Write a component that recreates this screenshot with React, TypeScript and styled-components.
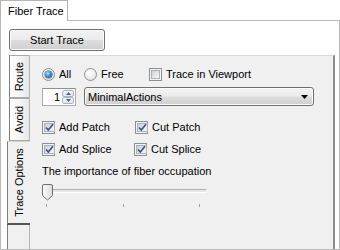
import React from "react";
import styled, { createGlobalStyle } from "styled-components";

const GlobalStyle = createGlobalStyle`
  html, body {
    margin: 0;
    padding: 0;
    background: #ffffff;
  }
  body {
    font-family: "Liberation Sans", Arial, sans-serif;
    font-size: 11px;
    color: #000000;
  }
`;

const Root = styled.div`
  width: 340px;
  height: 250px;
  display: flex;
  flex-direction: column;
  background: #ffffff;
  overflow: hidden;
`;

const TabHeaderRow = styled.div`
  display: flex;
  height: 20px;
`;

const OuterTab = styled.div`
  width: 68px;
  height: 20px;
  box-sizing: border-box;
  padding: 3px 0 0 7px;
  border: 1px solid #b4b4b4;
  border-bottom: none;
  background: #ffffff;
  margin-bottom: -1px;
  position: relative;
  z-index: 1;
  line-height: 14px;
  height: 21px;
`;

const OuterPage = styled.div`
  flex: 1;
  display: flex;
  flex-direction: column;
  border: 1px solid #b9b9b9;
  padding: 8px 4px 0 6px;
  min-height: 0;
`;

const StartButton = styled.button`
  width: 96px;
  height: 22px;
  margin-left: 2px;
  padding: 0;
  border: 1px solid #707070;
  border-radius: 3px;
  background: linear-gradient(
    to bottom,
    #f2f2f2 0%,
    #ebebeb 48%,
    #dddddd 52%,
    #cfcfcf 100%
  );
  box-shadow: inset 0 0 0 1px #fcfcfc;
  font-family: "Liberation Sans", Arial, sans-serif;
  font-size: 11px;
  color: #000000;
`;

const InnerTabs = styled.div`
  flex: 1;
  display: flex;
  margin-top: 4px;
  min-height: 0;
`;

const TabStrip = styled.div`
  width: 22px;
  display: flex;
  flex-direction: column;
`;

const SideTab = styled.div<{ $h: number; $selected?: boolean }>`
  height: ${(p) => p.$h}px;
  box-sizing: border-box;
  display: flex;
  align-items: center;
  justify-content: center;
  margin-left: ${(p) => (p.$selected ? 0 : 2)}px;
  margin-right: ${(p) => (p.$selected ? -1 : 0)}px;
  border: 1px solid ${(p) => (p.$selected ? "#7e7e7e" : "#a9a9a9")};
  border-right: none;
  border-top-color: ${(p) => (p.$selected ? "#d0d0d0" : "#a9a9a9")};
  border-left-color: #7e7e7e;
  background: ${(p) =>
    p.$selected
      ? "#f0f0f0"
      : "linear-gradient(to right, #fdfdfd 0%, #f3f3f3 60%, #e6e6e6 100%)"};
  position: relative;
  z-index: ${(p) => (p.$selected ? 1 : 0)};
  border-bottom-color: ${(p) => (p.$selected ? "#555555" : "#a9a9a9")};
  border-bottom-width: ${(p) => (p.$selected ? 2 : 1)}px;
`;

const SideTabLabel = styled.span`
  transform: rotate(-90deg);
  white-space: nowrap;
  line-height: 13px;
`;

const StripFill = styled.div`
  flex: 1;
  background: #f0f0f0;
  border-left: 1px solid #7e7e7e;
`;

const Content = styled.div`
  flex: 1;
  background: #f0f0f0;
  border-top: 1px solid #dadada;
  border-left: 1px solid #b4b4b4;
  border-right: 2px solid #8c8c8c;
  padding: 12px 0 0 12px;
  display: flex;
  flex-direction: column;
`;

const Row = styled.div<{ $mt?: number }>`
  display: flex;
  align-items: center;
  margin-top: ${(p) => p.$mt ?? 0}px;
`;

const Option = styled.label<{ $w?: number }>`
  display: flex;
  align-items: center;
  gap: 4px;
  height: 13px;
  width: ${(p) => (p.$w ? `${p.$w}px` : "auto")};
  line-height: 13px;
  white-space: nowrap;
`;

const RadioCircle = styled.span<{ $checked?: boolean }>`
  width: 13px;
  height: 13px;
  box-sizing: border-box;
  border-radius: 50%;
  border: 1px solid #8e8f8f;
  background: radial-gradient(circle at 40% 35%, #ffffff 0%, #e6e6e6 70%, #cfcfcf 100%);
  display: flex;
  align-items: center;
  justify-content: center;
  flex-shrink: 0;
  &::after {
    content: "";
    display: ${(p) => (p.$checked ? "block" : "none")};
    width: 7px;
    height: 7px;
    border-radius: 50%;
    background: radial-gradient(circle at 40% 35%, #b9e4fb 0%, #3a8fd2 45%, #174a86 100%);
    box-shadow: 0 0 0 0.5px #2b5c8c;
  }
`;

const CheckBox = styled.span`
  width: 13px;
  height: 13px;
  box-sizing: border-box;
  border: 1px solid #8e8f8f;
  background: #f4f4f4;
  padding: 1px;
  flex-shrink: 0;
  display: flex;
`;

const CheckInner = styled.span`
  flex: 1;
  background: linear-gradient(135deg, #cbcfd5 0%, #e8eaec 60%, #f6f6f6 100%);
  border: 1px solid #adb2b5;
  box-sizing: border-box;
  display: flex;
  align-items: center;
  justify-content: center;
`;

const Numeric = styled.div`
  width: 34px;
  height: 18px;
  box-sizing: border-box;
  border: 1px solid #abadb3;
  border-top-color: #8e8f8f;
  background: #ffffff;
  display: flex;
  align-items: stretch;
  padding: 1px;
`;

const NumericValue = styled.span`
  flex: 1;
  text-align: right;
  line-height: 14px;
  padding-right: 2px;
`;

const Spinner = styled.div`
  width: 12px;
  display: flex;
  flex-direction: column;
  gap: 0;
`;

const SpinButton = styled.div`
  flex: 1;
  box-sizing: border-box;
  border: 1px solid #a9b4c2;
  border-radius: 2px;
  background: linear-gradient(to bottom, #f3f6fa 0%, #dfe6ee 100%);
  display: flex;
  align-items: center;
  justify-content: center;
`;

const Combo = styled.div`
  width: 230px;
  height: 19px;
  margin-left: 8px;
  box-sizing: border-box;
  border: 1px solid #707070;
  border-radius: 3px;
  background: linear-gradient(
    to bottom,
    #f2f2f2 0%,
    #ebebeb 48%,
    #dddddd 52%,
    #cfcfcf 100%
  );
  box-shadow: inset 0 0 0 1px #fbfbfb;
  display: flex;
  align-items: center;
  justify-content: space-between;
  padding: 0 5px 0 3px;
`;

const Caption = styled.div<{ $mt?: number }>`
  margin-top: ${(p) => p.$mt ?? 0}px;
  line-height: 13px;
  white-space: nowrap;
`;

const Slider = styled.div`
  position: relative;
  width: 168px;
  height: 22px;
  margin-top: 6px;
`;

const Track = styled.div`
  position: absolute;
  left: 5px;
  width: 158px;
  top: 5px;
  height: 2px;
  border-top: 1px solid #b0b0b0;
  border-left: 1px solid #b0b0b0;
  border-bottom: 1px solid #ffffff;
  border-right: 1px solid #ffffff;
  background: #e7e7e7;
`;

const Thumb = styled.svg`
  position: absolute;
  left: 0;
  top: 0;
`;

const Tick = styled.div<{ $x: number }>`
  position: absolute;
  left: ${(p) => p.$x}px;
  top: 20px;
  width: 1px;
  height: 3px;
  background: #a0a0a0;
`;

const Radio = ({ label, checked, w }: { label: string; checked?: boolean; w?: number }) => (
  <Option $w={w}>
    <RadioCircle $checked={checked} />
    {label}
  </Option>
);

const Check = ({ label, checked, w }: { label: string; checked?: boolean; w?: number }) => (
  <Option $w={w}>
    <CheckBox>
      <CheckInner>
        {checked && (
          <svg width="9" height="9" viewBox="0 0 9 9">
            <path d="M1 4.5 L3.3 7 L8 1.2" fill="none" stroke="#3d5390" strokeWidth="1.7" />
          </svg>
        )}
      </CheckInner>
    </CheckBox>
    {label}
  </Option>
);

const Arrow = ({ up }: { up?: boolean }) => (
  <svg width="5" height="3" viewBox="0 0 5 3">
    <path d={up ? "M0 3 L2.5 0 L5 3 Z" : "M0 0 L2.5 3 L5 0 Z"} fill="#4d6185" />
  </svg>
);

export default function App() {
  return (
    <>
      <GlobalStyle />
      <Root>
        <TabHeaderRow>
          <OuterTab>Fiber Trace</OuterTab>
        </TabHeaderRow>
        <OuterPage>
          <StartButton>Start Trace</StartButton>
          <InnerTabs>
            <TabStrip>
              <SideTab $h={43}>
                <SideTabLabel>Route</SideTabLabel>
              </SideTab>
              <SideTab $h={43}>
                <SideTabLabel>Avoid</SideTabLabel>
              </SideTab>
              <SideTab $h={84} $selected>
                <SideTabLabel>Trace Options</SideTabLabel>
              </SideTab>
              <StripFill />
            </TabStrip>
            <Content>
              <Row>
                <Radio label="All" checked w={42} />
                <Radio label="Free" w={65} />
                <Check label="Trace in Viewport" />
              </Row>
              <Row $mt={6}>
                <Numeric>
                  <NumericValue>1</NumericValue>
                  <Spinner>
                    <SpinButton>
                      <Arrow up />
                    </SpinButton>
                    <SpinButton>
                      <Arrow />
                    </SpinButton>
                  </Spinner>
                </Numeric>
                <Combo>
                  <span>MinimalActions</span>
                  <svg width="7" height="4" viewBox="0 0 7 4">
                    <path d="M0 0 H7 L3.5 4 Z" fill="#000000" />
                  </svg>
                </Combo>
              </Row>
              <Row $mt={15}>
                <Check label="Add Patch" checked w={93} />
                <Check label="Cut Patch" checked />
              </Row>
              <Row $mt={9}>
                <Check label="Add Splice" checked w={92} />
                <Check label="Cut Splice" checked />
              </Row>
              <Caption $mt={9}>The importance of fiber occupation</Caption>
              <Slider>
                <Track />
                <Thumb width="11" height="17" viewBox="0 0 11 17">
                  <defs>
                    <linearGradient id="thumbFill" x1="0" y1="0" x2="1" y2="0">
                      <stop offset="0" stopColor="#fbfbfb" />
                      <stop offset="1" stopColor="#dcdcdc" />
                    </linearGradient>
                  </defs>
                  <path
                    d="M0.5 2 Q0.5 0.5 2 0.5 H9 Q10.5 0.5 10.5 2 V11.5 L5.5 16 L0.5 11.5 Z"
                    fill="url(#thumbFill)"
                    stroke="#707070"
                  />
                </Thumb>
                <Tick $x={4} />
                <Tick $x={81} />
                <Tick $x={157} />
              </Slider>
            </Content>
          </InnerTabs>
        </OuterPage>
      </Root>
    </>
  );
}
